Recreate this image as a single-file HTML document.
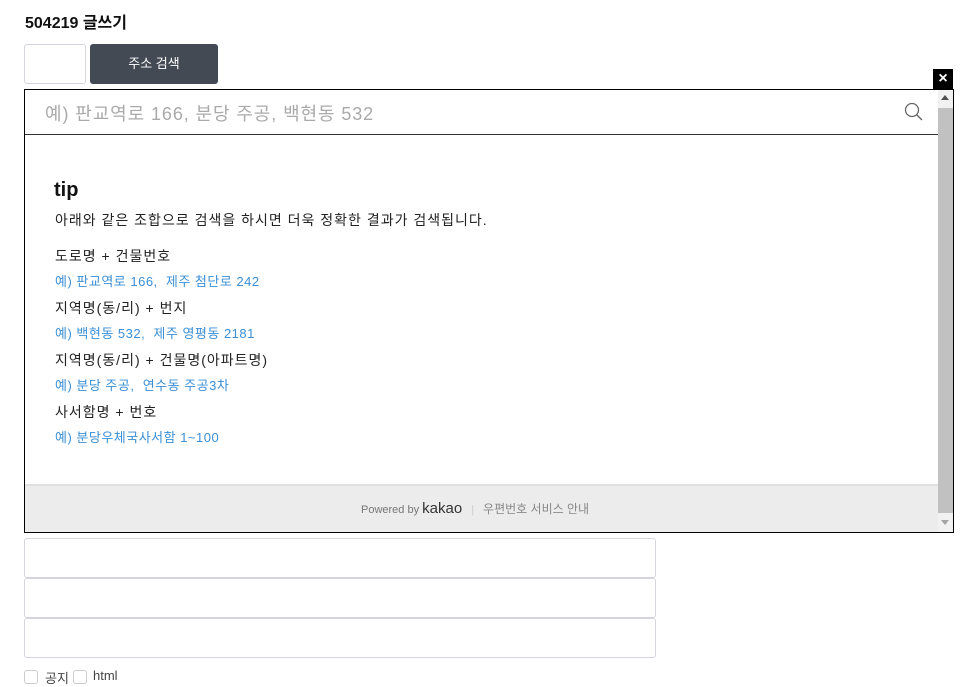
<!DOCTYPE html>
<html><head><meta charset="utf-8"><style>
*{margin:0;padding:0;box-sizing:border-box}
body{width:968px;height:676px;background:#fff;font-family:"Liberation Sans","Noto Sans CJK KR",sans-serif;position:relative;overflow:hidden;color:#222}
.a{position:absolute;white-space:nowrap}
.t{font-size:14px;color:#222;letter-spacing:1px}
.b{font-size:13px;color:#3a8fd6;letter-spacing:0.5px}
</style></head><body>
<div class="a" style="left:25px;top:9px;font-size:16px;font-weight:bold;color:#111">504219 글쓰기</div>
<div class="a" style="left:24px;top:44px;width:62px;height:40px;border:1px solid #d5d5dd;border-radius:3px"></div>
<div class="a" style="left:90px;top:44px;width:128px;height:40px;background:#434a54;border-radius:3px;color:#fff;font-size:13px;text-align:center;line-height:40px">주소 검색</div>
<div class="a" style="left:933px;top:69px;width:20px;height:20px;background:#000;color:#fff;font-size:16px;font-weight:bold;text-align:center;line-height:20px">×</div>
<div class="a" style="left:24px;top:89px;width:930px;height:444px;border:1px solid #000;background:#fff;overflow:hidden">
  <div class="a" style="left:0;top:0;width:913px;height:45px;border-bottom:1px solid #333"></div>
  <div class="a" style="left:20px;top:10px;font-size:18px;color:#aaa;letter-spacing:0.9px">예) 판교역로 166, 분당 주공, 백현동 532</div>
  <svg class="a" style="left:879px;top:12px" width="20" height="20" viewBox="0 0 20 20"><circle cx="8" cy="8" r="6.5" fill="none" stroke="#666" stroke-width="1.3"/><path d="M12.7 12.7L18 18" stroke="#666" stroke-width="1.4"/></svg>
  <div class="a" style="left:29px;top:89px;font-size:20px;font-weight:bold;color:#111">tip</div>
  <div class="a t" style="left:30px;top:120px">아래와 같은 조합으로 검색을 하시면 더욱 정확한 결과가 검색됩니다.</div>
  <div class="a t" style="left:30px;top:156px">도로명 + 건물번호</div>
  <div class="a b" style="left:30px;top:181px">예) 판교역로 166,&nbsp; 제주 첨단로 242</div>
  <div class="a t" style="left:30px;top:208px">지역명(동/리) + 번지</div>
  <div class="a b" style="left:30px;top:233px">예) 백현동 532,&nbsp; 제주 영평동 2181</div>
  <div class="a t" style="left:30px;top:260px">지역명(동/리) + 건물명(아파트명)</div>
  <div class="a b" style="left:30px;top:285px">예) 분당 주공,&nbsp; 연수동 주공3차</div>
  <div class="a t" style="left:30px;top:312px">사서함명 + 번호</div>
  <div class="a b" style="left:30px;top:337px">예) 분당우체국사서함 1~100</div>
  <div class="a" style="left:0;top:394px;width:913px;height:50px;background:#ececec;border-top:2px solid #e0e0e0"></div>
  <div class="a" style="left:336px;top:410px;font-size:11px;color:#777">Powered by <span style="font-size:15px;color:#333">kakao</span><span style="color:#ccc;margin:0 9px">|</span><span style="font-size:12px;color:#888">우편번호 서비스 안내</span></div>
  <div class="a" style="left:913px;top:0;width:15px;height:442px;background:#f1f1f1"></div>
  <div class="a" style="left:913px;top:18px;width:15px;height:405px;background:#c1c1c1"></div>
  <div class="a" style="left:916px;top:5px;width:0;height:0;border-left:4px solid transparent;border-right:4px solid transparent;border-bottom:5px solid #505050"></div>
  <div class="a" style="left:916px;top:430px;width:0;height:0;border-left:4px solid transparent;border-right:4px solid transparent;border-top:5px solid #a3a3a3"></div>
</div>
<div class="a" style="left:24px;top:538px;width:632px;height:40px;border:1px solid #d5d5dd;border-radius:3px"></div>
<div class="a" style="left:24px;top:578px;width:632px;height:40px;border:1px solid #d5d5dd;border-radius:3px"></div>
<div class="a" style="left:24px;top:618px;width:632px;height:40px;border:1px solid #d5d5dd;border-radius:3px"></div>
<div class="a" style="left:24px;top:670px;width:14px;height:14px;border:1px solid #ccc;border-radius:3px"></div>
<div class="a" style="left:45px;top:668px;font-size:13px;color:#444">공지</div>
<div class="a" style="left:73px;top:670px;width:14px;height:14px;border:1px solid #ccc;border-radius:3px"></div>
<div class="a" style="left:93px;top:668px;font-size:13px;color:#444">html</div>
</body></html>
